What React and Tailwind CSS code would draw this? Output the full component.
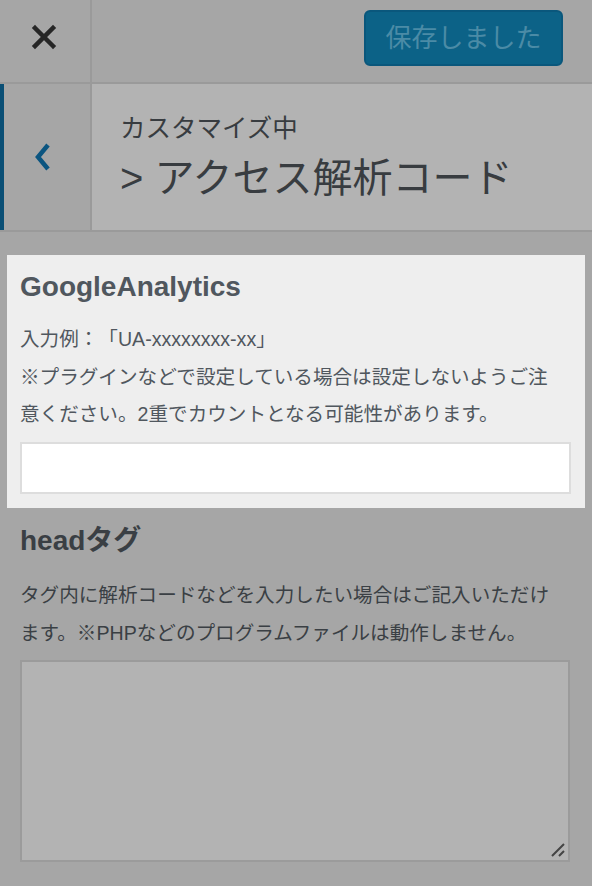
export default function App() {
  const font = { fontFamily: '"Liberation Sans", "Noto Sans CJK JP", sans-serif' };
  return (
    <div className="w-[592px] h-[886px] bg-[#a6a6a6] overflow-hidden [text-spacing-trim:space-all]" style={font}>
      {/* top bar */}
      <div className="flex h-[84px] border-b-2 border-[#9a9a9a]">
        <div className="w-[92px] border-r-2 border-[#9a9a9a] flex items-center justify-center pr-[2px] pb-[8px]">
          <svg width="26" height="26" viewBox="0 0 26 26">
            <path d="M4 4 L22 22 M22 4 L4 22" stroke="#262626" strokeWidth="4.5" strokeLinecap="square" />
          </svg>
        </div>
        <div className="flex-1 flex justify-end items-start pt-[10px] pr-[29px]">
          <div className="w-[199px] h-[56px] rounded-[6px] bg-[#0c6287] border-2 border-[#0a577c] flex items-center justify-center text-[26px] text-[#4b8ba6] leading-none">
            保存しました
          </div>
        </div>
      </div>

      {/* section header */}
      <div className="flex h-[148px] border-b-2 border-[#9a9a9a]">
        <div className="w-[92px] border-l-4 border-[#0a4f75] border-r-2 border-r-[#9a9a9a] flex items-center justify-center pr-[8px]">
          <svg width="20" height="32" viewBox="0 0 20 32">
            <path d="M15 4 L5 16 L15 28" fill="none" stroke="#0b5580" strokeWidth="4.5" strokeLinecap="butt" strokeLinejoin="miter" />
          </svg>
        </div>
        <div className="flex-1 bg-[#b3b3b3] pl-[28px] pt-[26px] text-[#383c40]">
          <div className="text-[25.5px] leading-[36px]">カスタマイズ中</div>
          <div className="text-[40px] leading-[52px] mt-[6px] whitespace-nowrap">&gt; アクセス解析コード</div>
        </div>
      </div>

      {/* highlighted control */}
      <div className="ml-[7px] w-[578px] mt-[23px] bg-[#eeeeee] pl-[13px] pr-[14px] pt-[14px] pb-[14px]">
        <div className="text-[28px] font-bold leading-[36px] text-[#50575e]">GoogleAnalytics</div>
        <div className="mt-[16px] text-[19.6px] leading-[37.5px] text-[#50575e] whitespace-nowrap">
          <div>入力例：「UA-xxxxxxxx-xx」</div>
          <div>※プラグインなどで設定している場合は設定しないようご注</div>
          <div>意ください。2重でカウントとなる可能性があります。</div>
        </div>
        <div className="mt-[8px] h-[52px] bg-white border-2 border-[#dddddd]"></div>
      </div>

      {/* dimmed control */}
      <div className="pl-[20px] pr-[22px]">
        <div className="mt-[15px] text-[28px] font-bold leading-[36px] text-[#3a3f44]">headタグ</div>
        <div className="mt-[17px] text-[19.6px] leading-[38px] text-[#3a3f44] whitespace-nowrap">
          <div>タグ内に解析コードなどを入力したい場合はご記入いただけ</div>
          <div>ます。※PHPなどのプログラムファイルは動作しません。</div>
        </div>
        <div className="relative mt-[8px] h-[202px] bg-[#b3b3b3] border-2 border-[#9b9b9b]">
          <svg className="absolute right-[2px] bottom-[2px]" width="16" height="16" viewBox="0 0 16 16">
            <path d="M2 14 L14 2 M9 14 L14 9" stroke="#444" strokeWidth="2" />
          </svg>
        </div>
      </div>
    </div>
  );
}
